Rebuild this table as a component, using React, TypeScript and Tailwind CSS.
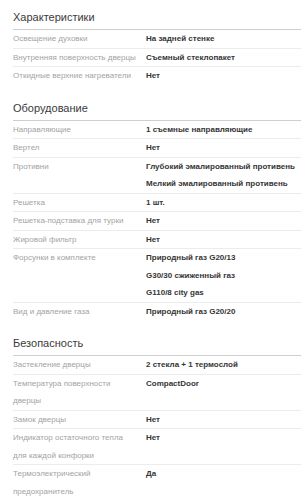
import React from "react";

type Row = { label: string; values: string[] };
type Section = { title: string; rows: Row[] };

const sections: Section[] = [
  {
    title: "Характеристики",
    rows: [
      { label: "Освещение духовки", values: ["На задней стенке"] },
      { label: "Внутренняя поверхность дверцы", values: ["Съемный стеклопакет"] },
      { label: "Откидные верхние нагреватели", values: ["Нет"] },
    ],
  },
  {
    title: "Оборудование",
    rows: [
      { label: "Направляющие", values: ["1 съемные направляющие"] },
      { label: "Вертел", values: ["Нет"] },
      {
        label: "Противни",
        values: ["Глубокий эмалированный противень", "Мелкий эмалированный противень"],
      },
      { label: "Решетка", values: ["1 шт."] },
      { label: "Решетка-подставка для турки", values: ["Нет"] },
      { label: "Жировой фильтр", values: ["Нет"] },
      {
        label: "Форсунки в комплекте",
        values: ["Природный газ G20/13", "G30/30 сжиженный газ", "G110/8 city gas"],
      },
      { label: "Вид и давление газа", values: ["Природный газ G20/20"] },
    ],
  },
  {
    title: "Безопасность",
    rows: [
      { label: "Застекление дверцы", values: ["2 стекла + 1 термослой"] },
      { label: "Температура поверхности дверцы", values: ["CompactDoor"] },
      { label: "Замок дверцы", values: ["Нет"] },
      { label: "Индикатор остаточного тепла для каждой конфорки", values: ["Нет"] },
      { label: "Термоэлектрический предохранитель", values: ["Да"] },
    ],
  },
];

function SpecSection({ section, first }: { section: Section; first: boolean }) {
  return (
    <section className={first ? "" : "mt-[6px]"}>
      <h2 className="pt-[9px] pb-[4px] text-[11px] leading-[16px] text-[#3a3a3a] font-normal border-b border-[#cfcfcf]">
        {section.title}
      </h2>
      <dl>
        {section.rows.map((row, i) => (
          <div
            key={row.label}
            className={
              "flex text-[8px] leading-[17.5px] " +
              (i < section.rows.length - 1 ? "border-b border-[#ececec]" : "")
            }
          >
            <dt className="w-[133px] shrink-0 pr-[9.5px] text-[#a3a3a3]">{row.label}</dt>
            <dd className="font-bold text-[#353535] whitespace-nowrap">
              {row.values.map((v) => (
                <div key={v}>{v}</div>
              ))}
            </dd>
          </div>
        ))}
      </dl>
    </section>
  );
}

export default function App() {
  return (
    <div
      className="w-[301px] h-[500px] overflow-hidden bg-white pl-[13px]"
      style={{ fontFamily: '"Liberation Sans", Arial, sans-serif' }}
    >
      {sections.map((s, i) => (
        <SpecSection key={s.title} section={s} first={i === 0} />
      ))}
    </div>
  );
}
